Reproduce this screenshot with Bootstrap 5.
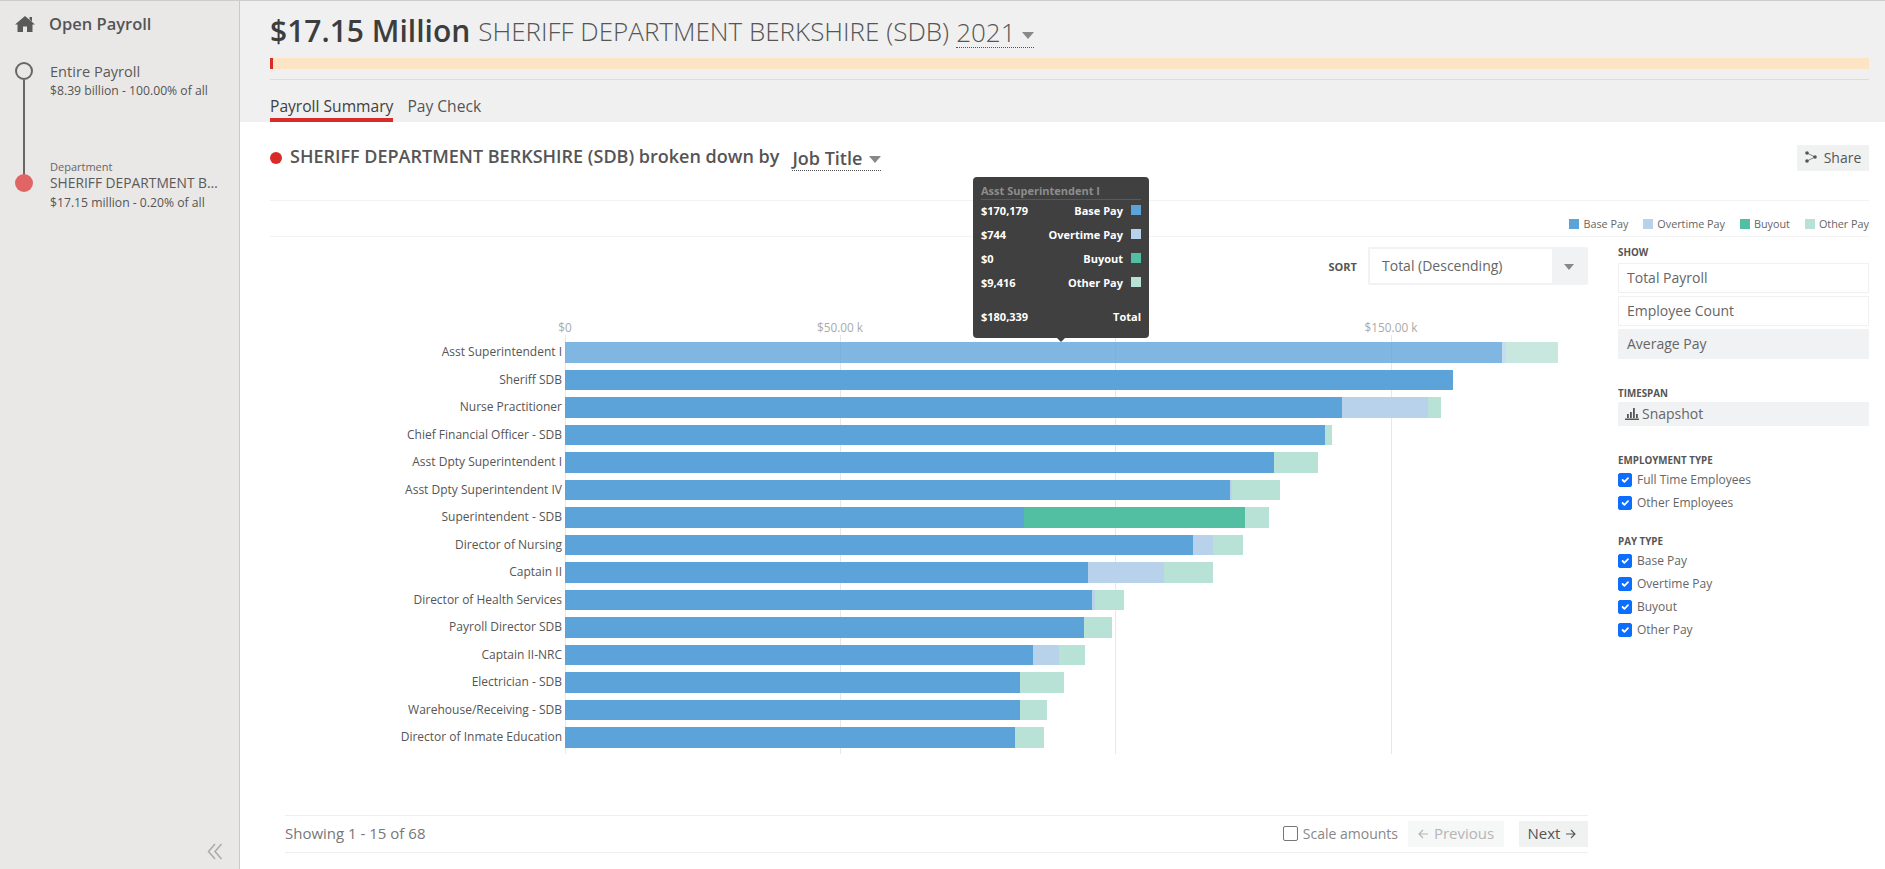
<!DOCTYPE html>
<html lang="en">
<head>
<meta charset="utf-8">
<title>Open Payroll</title>
<link href="https://cdn.jsdelivr.net/npm/bootstrap@5.3.0/dist/css/bootstrap.min.css" rel="stylesheet">
<script src="https://cdn.jsdelivr.net/npm/bootstrap@5.3.0/dist/js/bootstrap.bundle.min.js"></script>
<style>
html,body{height:869px;overflow:hidden}
body{font-family:"Open Sans",sans-serif;color:#555;background:#fff;font-size:13px}
.shell{height:869px}
.side{width:240px;flex:none;background:#e9e8e6;border-right:1px solid #c9c9c9;border-top:1px solid #ccc;padding-left:15px;height:869px}
.brand{height:46px;gap:14px;font-size:16.5px;font-weight:600;color:#555}
.tl-text{margin-left:17px;width:175px}
.tl-name{font-size:14.6px;line-height:20px;color:#5a5a5a}
.tl-name.cut{font-size:13.8px;line-height:18px}
.tl-sub{font-size:12.2px;line-height:16px;color:#555}
.tl-kind{font-size:11px;line-height:14px;color:#666}
.gap-b{margin-top:61px}
.collapse-ico{margin-top:auto;margin-right:16px;margin-bottom:9px;align-self:flex-end;display:block}
.pane{flex:1 1 auto;min-width:0}
.head{height:122px;background:#f0f0f0;padding:10px 16px 0 30px;border-top:1px solid #ccc}
.title-row{height:40px;line-height:40px;white-space:nowrap}
.amount{font-size:30px;font-weight:600;color:#3d3d3d}
.org{font-size:26px;font-weight:300;color:#555}
.dotted{border-bottom:1px dotted #555;display:inline-block}
.year{line-height:30px;margin-top:3px;margin-left:7px}
.tri{display:inline-block;width:0;height:0;border-left:6px solid transparent;border-right:6px solid transparent;border-top:7px solid #888;vertical-align:middle;margin-left:6px}
.payline{height:11px;background:#fde4c4;margin-top:7px;border-radius:0}
.payline .progress-bar{background:#d92b27;width:3px}
.head-rule{height:1px;background:#dcdcdc;margin-top:10px}
.tabs{gap:14px;font-size:15.6px}
.tab-link{display:block;padding-top:16px;line-height:20px;padding-bottom:2px;border-bottom:4px solid transparent;color:#555;text-decoration:none;height:42px}
.tab-link.on{border-bottom-color:#d92b27;color:#3f3f3f}
.body-pad{padding:23px 16px 0 30px}
.sec-row{padding-bottom:29px;border-bottom:1px solid #f2f2f2;box-sizing:content-box;height:26px}
.red-dot{width:12px;height:12px;border-radius:50%;background:#d92b27;margin-right:8px;flex:none}
.sec-title{font-size:18px;font-weight:600;color:#555;white-space:nowrap;position:relative;top:-2px}
.job{font-size:18px;font-weight:600;color:#555;margin-left:13px;line-height:24px;position:relative;top:0}
.job .tri{margin-left:7px}
.share{width:72px;height:26px;background:#f0f2f2;border:0;border-radius:0;font-size:14px;color:#555;padding:0 0 2px;gap:7px}
.legend-row{height:36px;border-bottom:1px solid #f2f2f2;padding-bottom:4px;font-size:10.800px;gap:15px;line-height:16px;color:#666}
.swatch{width:10px;height:10px;display:inline-block;flex:none}
.s-base{background:#5ca3da}.s-ot{background:#b8d2ec}.s-buy{background:#52bfa3}.s-oth{background:#b9e2d6}
.chart-col{width:1318px;flex:none}
.ctrl-col{width:251px;flex:none;margin-left:30px}
.sort-row{margin-top:10px;height:38px}
.sort-lab{font-size:11px;font-weight:700;color:#555;margin-right:11px;padding-top:2px}
.sort-box{width:220px;height:38px;border:2px solid #f1f2f3;background:#f1f2f3;border-radius:2px}
.sort-val{width:182px;background:#fff;height:100%;font-size:14px;line-height:34px;padding-left:12px;color:#666}
.sort-btn{flex:1;text-align:center}
.sort-btn .tri{margin:0;border-left-width:5px;border-right-width:5px;border-top-width:6px}
.canvas{position:relative;padding-top:57px;padding-bottom:6px}
.tick{position:absolute;top:35px;font-size:11.800px;line-height:14px;color:#aaa;transform:translateX(-50%);white-space:nowrap}
.gridln{position:absolute;top:50px;height:419px;width:1px;background:#e8e8e8}
.bar-row{height:20.5px;margin-bottom:7px;position:relative}
.bar-row:last-of-type{margin-bottom:0}
.bar-lab{width:292px;margin-right:3px;text-align:right;font-size:12px;line-height:19px;flex:none;color:#555;white-space:nowrap}
.seg{height:100%;flex:none}
.bar-row.hot .seg{opacity:.78}
.tipbox{position:absolute;left:703px;top:-108px;width:176px;height:161px;background:#404040;border-radius:4px;padding:7px 8px;color:#fff;font-size:11px;font-weight:700;z-index:5}
.tipbox::after{content:"";position:absolute;left:84px;bottom:-4px;border-left:4px solid transparent;border-right:4px solid transparent;border-top:4px solid #404040}
.tip-title{color:#8d8d8d;line-height:13px;padding-bottom:2px;border-bottom:1px solid #5a5a5a;margin-bottom:3px}
.tip-line{height:24px;line-height:16px}
.tip-line .swatch{margin-left:8px;margin-top:2px}
.tip-sum{margin-top:10px}
.foot{margin:61px 0 0 15px;height:38px;border-top:1px solid #eee;border-bottom:1px solid #eee;font-size:15px;color:#777}
.scale-check{gap:5px;font-size:14px;color:#888;margin-right:10px}
.scale-check .form-check-input{width:15px;height:15px;margin:0;border:1px solid #777;border-radius:2px}
.pg-btn{height:26px;border:0;border-radius:0;padding:0;font-size:15px;display:flex;align-items:center;justify-content:center;gap:5px}
.pg-prev,.pg-prev:disabled{width:96px;background:#f6f7f7;color:#b5b5b5;margin-right:15px;opacity:1}
.pg-next{width:69px;background:#f0f2f2;color:#555;padding-right:3px}
.ctl-head{font-size:9.8px;font-weight:700;line-height:12px;color:#555;text-transform:uppercase}
.opt-btn{height:30px;border:1px solid #f1f1f1;border-radius:0;background:#fff;font-size:14px;line-height:28px;padding:0 8px;color:#666;margin-bottom:3px;display:block;text-decoration:none}
.opt-btn.on{background:#f0f2f4;border-color:#f0f2f4}
.span-btn{height:24px;background:#f0f2f4;font-size:14px;line-height:24px;padding-left:7px;color:#666;gap:0}
.chk{height:23px;gap:5px;font-size:12px;color:#666;margin:0;padding:0;min-height:0}
.chk .form-check-input{width:14px;height:14px;margin:0;float:none;border-radius:2px;flex:none}
</style>
</head>
<body class="m-0">
<div class="shell d-flex">
  <aside class="side d-flex flex-column">
    <div class="brand d-flex align-items-center">
      <svg width="20" height="16" viewBox="0 0 20 16" class="flex-none" aria-hidden="true"><path fill="#5a5a5a" d="M10 0 20 8.500h-2.500V16H12v-5.500H8V16H2.500V8.500H0Z M14.500 1h2.500v4.400l-2.500-2.200Z"/></svg>
      <span>Open Payroll</span>
    </div>
    <div class="d-flex" style="margin-top:15px">
      <svg width="18" height="130" viewBox="0 0 18 130" class="flex-none" aria-hidden="true"><circle cx="9" cy="9" r="8" fill="none" stroke="#666" stroke-width="2"/><line x1="9" y1="18" x2="9" y2="114" stroke="#666" stroke-width="2"/><circle cx="9" cy="121" r="9" fill="#e06666"/></svg>
      <div class="tl-text">
        <div class="tl-name" style="margin-top:-1px">Entire Payroll</div>
        <div class="tl-sub" style="margin-top:2px">$8.39 billion - 100.00% of all</div>
        <div class="tl-kind gap-b">Department</div>
        <div class="tl-name cut text-truncate">SHERIFF DEPARTMENT BERKSHIRE (SDB)</div>
        <div class="tl-sub" style="margin-top:3px">$17.15 million - 0.20% of all</div>
      </div>
    </div>
    <svg class="collapse-ico" width="16" height="17" viewBox="0 0 16 17" aria-hidden="true"><path d="M8 1 1.500 8.500 8 16M14.500 1 8 8.500 14.500 16" fill="none" stroke="#a9a9a9" stroke-width="1.500"/></svg>
  </aside>
  <div class="pane">
    <header class="head">
      <div class="title-row d-flex align-items-center">
        <span class="amount">$17.15 Million</span>
        <span class="org ms-2">SHERIFF DEPARTMENT BERKSHIRE (SDB)</span>
        <span class="org dotted year">2021<span class="tri"></span></span>
      </div>
      <div class="progress payline"><div class="progress-bar"></div></div>
      <div class="head-rule"></div>
      <nav class="tabs d-flex">
        <a class="tab-link on" href="#">Payroll Summary</a>
        <a class="tab-link" href="#">Pay Check</a>
      </nav>
    </header>
    <div class="body-pad">
      <div class="sec-row d-flex align-items-start">
        <div class="d-flex align-items-center flex-grow-1" style="height:26px">
          <span class="red-dot"></span>
          <span class="sec-title">SHERIFF DEPARTMENT BERKSHIRE (SDB) broken down by</span>
          <span class="job dotted">Job Title<span class="tri"></span></span>
        </div>
        <button class="btn share d-flex align-items-center justify-content-center" type="button">
          <svg width="12" height="12" viewBox="0 0 12 12" aria-hidden="true"><circle cx="2" cy="2" r="1.800" fill="#555"/><circle cx="2" cy="10" r="1.800" fill="#555"/><circle cx="10" cy="6" r="1.800" fill="#555"/><path d="M2 2 10 6 2 10" stroke="#555" fill="none" stroke-width=".7"/></svg>
          Share
        </button>
      </div>
      <div class="legend-row d-flex justify-content-end align-items-end">
        <span class="d-flex align-items-center gap-1"><i class="swatch s-base"></i>Base Pay</span>
        <span class="d-flex align-items-center gap-1"><i class="swatch s-ot"></i>Overtime Pay</span>
        <span class="d-flex align-items-center gap-1"><i class="swatch s-buy"></i>Buyout</span>
        <span class="d-flex align-items-center gap-1"><i class="swatch s-oth"></i>Other Pay</span>
      </div>
      <div class="d-flex">
        <div class="chart-col">
          <div class="sort-row d-flex justify-content-end align-items-center">
            <span class="sort-lab">SORT</span>
            <div class="sort-box d-flex align-items-center">
              <div class="sort-val">Total (Descending)</div>
              <div class="sort-btn"><span class="tri"></span></div>
            </div>
          </div>
          <div class="canvas">
            <span class="tick" style="left:295px">$0</span>
            <span class="tick" style="left:570px">$50.00 k</span>
            <span class="tick" style="left:1121px">$150.00 k</span>
            <i class="gridln" style="left:295px"></i>
            <i class="gridln" style="left:570px"></i>
            <i class="gridln" style="left:845px"></i>
            <i class="gridln" style="left:1121px"></i>

            <div class="tipbox">
              <div class="tip-title">Asst Superintendent I</div>
              <div class="tip-line d-flex"><span class="me-auto">$170,179</span><span>Base Pay</span><i class="swatch s-base"></i></div>
              <div class="tip-line d-flex"><span class="me-auto">$744</span><span>Overtime Pay</span><i class="swatch s-ot"></i></div>
              <div class="tip-line d-flex"><span class="me-auto">$0</span><span>Buyout</span><i class="swatch s-buy"></i></div>
              <div class="tip-line d-flex"><span class="me-auto">$9,416</span><span>Other Pay</span><i class="swatch s-oth"></i></div>
              <div class="tip-line tip-sum d-flex"><span class="me-auto">$180,339</span><span>Total</span></div>
            </div>

            <div class="bar-row hot d-flex"><span class="bar-lab">Asst Superintendent I</span><i class="seg s-base" style="width:937px"></i><i class="seg s-ot" style="width:4px"></i><i class="seg s-oth" style="width:52px"></i></div>
            <div class="bar-row d-flex"><span class="bar-lab">Sheriff SDB</span><i class="seg s-base" style="width:887.5px"></i></div>
            <div class="bar-row d-flex"><span class="bar-lab">Nurse Practitioner</span><i class="seg s-base" style="width:777px"></i><i class="seg s-ot" style="width:86px"></i><i class="seg s-oth" style="width:13px"></i></div>
            <div class="bar-row d-flex"><span class="bar-lab">Chief Financial Officer - SDB</span><i class="seg s-base" style="width:759.5px"></i><i class="seg s-oth" style="width:7.5px"></i></div>
            <div class="bar-row d-flex"><span class="bar-lab">Asst Dpty Superintendent I</span><i class="seg s-base" style="width:709px"></i><i class="seg s-oth" style="width:43.5px"></i></div>
            <div class="bar-row d-flex"><span class="bar-lab">Asst Dpty Superintendent IV</span><i class="seg s-base" style="width:665px"></i><i class="seg s-ot" style="width:1.5px"></i><i class="seg s-oth" style="width:48.5px"></i></div>
            <div class="bar-row d-flex"><span class="bar-lab">Superintendent - SDB</span><i class="seg s-base" style="width:458.5px"></i><i class="seg s-buy" style="width:221px"></i><i class="seg s-oth" style="width:24.5px"></i></div>
            <div class="bar-row d-flex"><span class="bar-lab">Director of Nursing</span><i class="seg s-base" style="width:628.3px"></i><i class="seg s-ot" style="width:19.7px"></i><i class="seg s-oth" style="width:30.5px"></i></div>
            <div class="bar-row d-flex"><span class="bar-lab">Captain II</span><i class="seg s-base" style="width:523px"></i><i class="seg s-ot" style="width:76px"></i><i class="seg s-oth" style="width:48.5px"></i></div>
            <div class="bar-row d-flex"><span class="bar-lab">Director of Health Services</span><i class="seg s-base" style="width:526.5px"></i><i class="seg s-ot" style="width:3px"></i><i class="seg s-oth" style="width:29.5px"></i></div>
            <div class="bar-row d-flex"><span class="bar-lab">Payroll Director SDB</span><i class="seg s-base" style="width:519px"></i><i class="seg s-oth" style="width:28px"></i></div>
            <div class="bar-row d-flex"><span class="bar-lab">Captain II-NRC</span><i class="seg s-base" style="width:468px"></i><i class="seg s-ot" style="width:25.5px"></i><i class="seg s-oth" style="width:26px"></i></div>
            <div class="bar-row d-flex"><span class="bar-lab">Electrician - SDB</span><i class="seg s-base" style="width:454.5px"></i><i class="seg s-oth" style="width:44.5px"></i></div>
            <div class="bar-row d-flex"><span class="bar-lab">Warehouse/Receiving - SDB</span><i class="seg s-base" style="width:454.5px"></i><i class="seg s-oth" style="width:27.5px"></i></div>
            <div class="bar-row d-flex"><span class="bar-lab">Director of Inmate Education</span><i class="seg s-base" style="width:450px"></i><i class="seg s-oth" style="width:28.5px"></i></div>
          </div>
          <div class="foot d-flex align-items-center">
            <span class="me-auto">Showing 1 - 15 of 68</span>
            <label class="scale-check d-flex align-items-center"><input class="form-check-input" type="checkbox">Scale amounts</label>
            <button class="btn pg-btn pg-prev" type="button" disabled>
              <svg width="11" height="10" viewBox="0 0 11 10" aria-hidden="true"><path d="M10 5H1M5 1 1 5l4 4" fill="none" stroke="#b5b5b5" stroke-width="1.100"/></svg>Previous</button>
            <button class="btn pg-btn pg-next" type="button">Next
              <svg width="11" height="10" viewBox="0 0 11 10" aria-hidden="true"><path d="M1 5h9M6 1l4 4-4 4" fill="none" stroke="#555" stroke-width="1.100"/></svg></button>
          </div>
        </div>
        <div class="ctrl-col">
          <div class="ctl-head" style="margin-top:10px;margin-bottom:4px">Show</div>
          <a class="opt-btn" href="#">Total Payroll</a>
          <a class="opt-btn" href="#">Employee Count</a>
          <a class="opt-btn on" href="#">Average Pay</a>
          <div class="ctl-head" style="margin-top:28.500px;margin-bottom:2px">Timespan</div>
          <div class="span-btn d-flex align-items-center">
            <svg width="14" height="12" viewBox="0 0 14 12" aria-hidden="true"><path fill="#555" d="M0 10.500h14V12H0Z M2 6h1.800v4H2Z M5 4h1.800v6H5Z M8 0h1.800v10H8Z M11 6h1.800v4H11Z"/></svg>
            <span style="margin-left:3px">Snapshot</span>
          </div>
          <div class="ctl-head" style="margin-top:29.300px;margin-bottom:2px">Employment Type</div>
          <label class="chk form-check d-flex align-items-center"><input class="form-check-input" type="checkbox" checked>Full Time Employees</label>
          <label class="chk form-check d-flex align-items-center"><input class="form-check-input" type="checkbox" checked>Other Employees</label>
          <div class="ctl-head" style="margin-top:21px;margin-bottom:2px">Pay Type</div>
          <label class="chk form-check d-flex align-items-center"><input class="form-check-input" type="checkbox" checked>Base Pay</label>
          <label class="chk form-check d-flex align-items-center"><input class="form-check-input" type="checkbox" checked>Overtime Pay</label>
          <label class="chk form-check d-flex align-items-center"><input class="form-check-input" type="checkbox" checked>Buyout</label>
          <label class="chk form-check d-flex align-items-center"><input class="form-check-input" type="checkbox" checked>Other Pay</label>
        </div>
      </div>
    </div>
  </div>
</div>
</body>
</html>
